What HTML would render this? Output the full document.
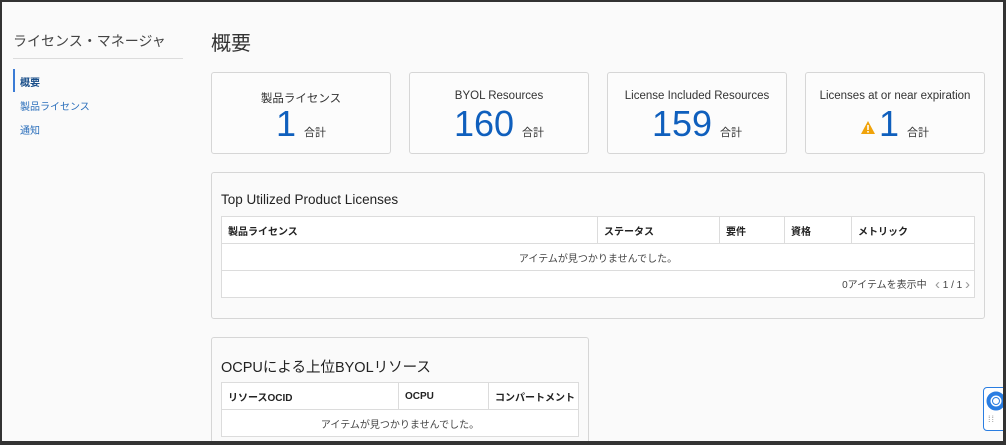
<!DOCTYPE html>
<html><head><meta charset="utf-8"><style>
*{box-sizing:border-box;margin:0;padding:0}
html,body{width:1006px;height:445px;overflow:hidden}
body{background:#fafafa;font-family:"Liberation Sans","Noto Sans CJK JP",sans-serif;color:#333;position:relative}
.frame{position:absolute;left:0;top:0;width:1006px;height:445px;border:2px solid #333;border-right-width:3px;border-bottom-width:4px;z-index:10;pointer-events:none}
.a{position:absolute;white-space:nowrap}
.card{position:absolute;top:72px;width:180px;height:82px;border:1px solid #d6d6d6;border-radius:3px;background:#fcfcfc;text-align:center}
.card .l{position:absolute;top:17px;left:0;right:0;font-size:11.5px;color:#333}
.card .n{position:absolute;top:31px;left:0;right:0;font-size:36px;color:#0f5fbd;line-height:40px}
.card .n small{font-size:11px;color:#333;margin-left:8px}
.panel{position:absolute;border:1px solid #d6d6d6;border-radius:3px;background:#fafafa}
table{position:absolute;border-collapse:collapse;background:#fff;font-size:10px;table-layout:fixed}
td,th{border:1px solid #dcdcdc;height:27px;padding:0 6px;text-align:left;white-space:nowrap;overflow:hidden}
th{font-weight:bold;color:#222}
</style></head><body>
<div class="frame"></div>
<div class="a" style="left:13px;top:31px;font-size:14px;color:#444">ライセンス・マネージャ</div>
<div class="a" style="left:13px;top:58px;width:170px;height:1px;background:#dcdcdc"></div>
<div class="a" style="left:13px;top:69px;width:2px;height:23px;background:#3a7bd5"></div>
<div class="a" style="left:20px;top:74px;font-size:10px;color:#1a4f8a;font-weight:bold">概要</div>
<div class="a" style="left:20px;top:98px;font-size:10px;color:#2a6ebb">製品ライセンス</div>
<div class="a" style="left:20px;top:122px;font-size:10px;color:#2a6ebb">通知</div>
<div class="a" style="left:211px;top:27px;font-size:20px;color:#333">概要</div>

<div class="card" style="left:211px"><div class="l">製品ライセンス</div><div class="n">1<small>合計</small></div></div>
<div class="card" style="left:409px"><div class="l">BYOL Resources</div><div class="n">160<small>合計</small></div></div>
<div class="card" style="left:607px"><div class="l">License Included Resources</div><div class="n">159<small>合計</small></div></div>
<div class="card" style="left:805px"><div class="l">Licenses at or near expiration</div><div class="n"><svg width="14" height="13" viewBox="0 0 14 13" style="margin-right:4px;vertical-align:2px"><path d="M7 0L14 13H0Z" fill="#f0a30a"/><rect x="6.2" y="4" width="1.6" height="5" fill="#fff"/><rect x="6.2" y="10" width="1.6" height="1.6" fill="#fff"/></svg>1<small>合計</small></div></div>

<div class="panel" style="left:211px;top:172px;width:774px;height:147px"></div>
<div class="a" style="left:221px;top:192px;font-size:13.5px;color:#222">Top Utilized Product Licenses</div>
<table style="left:221px;top:216px;width:754px">
<tr><th style="width:376px">製品ライセンス</th><th style="width:122px">ステータス</th><th style="width:65px">要件</th><th style="width:67px">資格</th><th>メトリック</th></tr>
<tr><td colspan="5" style="text-align:center;color:#444">アイテムが見つかりませんでした。</td></tr>
<tr><td colspan="5" style="text-align:right;color:#444;padding-right:4px">0アイテムを表示中 &nbsp; <span style="color:#999;font-size:15px;vertical-align:-1px">&lsaquo;</span> 1 / 1 <span style="color:#999;font-size:15px;vertical-align:-1px">&rsaquo;</span></td></tr>
</table>

<div class="panel" style="left:211px;top:337px;width:378px;height:110px"></div>
<div class="a" style="left:221px;top:356px;font-size:14.5px;color:#222">OCPUによる上位BYOLリソース</div>
<table style="left:221px;top:382px;width:358px">
<tr><th style="width:177px">リソースOCID</th><th style="width:90px">OCPU</th><th>コンパートメント</th></tr>
<tr><td colspan="3" style="text-align:center;color:#444">アイテムが見つかりませんでした。</td></tr>
</table>

<div class="a" style="left:983px;top:387px;width:26px;height:44px;border:1px solid #2a7de1;border-radius:4px;background:#fff"></div>
<svg class="a" style="left:986px;top:391px" width="20" height="20" viewBox="0 0 20 20"><circle cx="10" cy="10" r="7.5" fill="none" stroke="#2a7de1" stroke-width="4"/><circle cx="10" cy="10" r="3.5" fill="#fff" stroke="#2a7de1"/></svg>
<div class="a" style="left:988px;top:414px;font-size:9px;color:#999;letter-spacing:1px">⁞⁞</div>
</body></html>
